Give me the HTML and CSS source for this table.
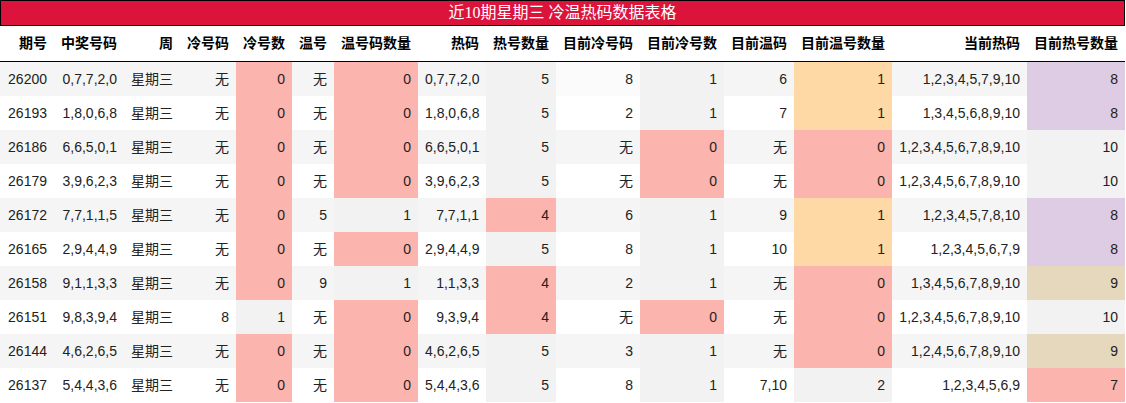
FILE: index.html
```html
<!DOCTYPE html>
<html lang="zh">
<head>
<meta charset="utf-8">
<title>近10期星期三 冷温热码数据表格</title>
<link rel="stylesheet" href="styles.css">
</head>
<body>
<table class="data">
  <caption class="title">近10期星期三 冷温热码数据表格</caption>
  <colgroup>
    <col class="w54"><col class="w70"><col class="w56"><col class="w56"><col class="w56">
    <col class="w42"><col class="w84"><col class="w68"><col class="w70"><col class="w84">
    <col class="w84"><col class="w70"><col class="w98"><col class="w135"><col class="w98">
  </colgroup>
  <thead>
    <tr>
      <th>期号</th><th>中奖号码</th><th>周</th><th>冷号码</th><th>冷号数</th><th>温号</th><th>温号码数量</th><th>热码</th><th>热号数量</th><th>目前冷号码</th><th>目前冷号数</th><th>目前温码</th><th>目前温号数量</th><th>当前热码</th><th>目前热号数量</th>
    </tr>
  </thead>
  <tbody>
    <tr class="odd">
      <td>26200</td><td>0,7,7,2,0</td><td>星期三</td><td>无</td><td class="pk">0</td><td>无</td><td class="pk">0</td><td>0,7,7,2,0</td><td class="gy">5</td><td class="hl">8</td><td class="gy">1</td><td>6</td><td class="or">1</td><td>1,2,3,4,5,7,9,10</td><td class="pu">8</td>
    </tr>
    <tr>
      <td>26193</td><td>1,8,0,6,8</td><td>星期三</td><td>无</td><td class="pk">0</td><td>无</td><td class="pk">0</td><td>1,8,0,6,8</td><td class="gy">5</td><td>2</td><td class="gy">1</td><td>7</td><td class="or">1</td><td>1,3,4,5,6,8,9,10</td><td class="pu">8</td>
    </tr>
    <tr class="odd">
      <td>26186</td><td>6,6,5,0,1</td><td>星期三</td><td>无</td><td class="pk">0</td><td>无</td><td class="pk">0</td><td>6,6,5,0,1</td><td class="gy">5</td><td>无</td><td class="pk">0</td><td>无</td><td class="pk">0</td><td>1,2,3,4,5,6,7,8,9,10</td><td class="gy">10</td>
    </tr>
    <tr>
      <td>26179</td><td>3,9,6,2,3</td><td>星期三</td><td>无</td><td class="pk">0</td><td>无</td><td class="pk">0</td><td>3,9,6,2,3</td><td class="gy">5</td><td>无</td><td class="pk">0</td><td>无</td><td class="pk">0</td><td>1,2,3,4,5,6,7,8,9,10</td><td class="gy">10</td>
    </tr>
    <tr class="odd">
      <td>26172</td><td>7,7,1,1,5</td><td>星期三</td><td>无</td><td class="pk">0</td><td>5</td><td class="gy">1</td><td>7,7,1,1</td><td class="pk">4</td><td>6</td><td class="gy">1</td><td>9</td><td class="or">1</td><td>1,2,3,4,5,7,8,10</td><td class="pu">8</td>
    </tr>
    <tr>
      <td>26165</td><td>2,9,4,4,9</td><td>星期三</td><td>无</td><td class="pk">0</td><td>无</td><td class="pk">0</td><td>2,9,4,4,9</td><td class="gy">5</td><td>8</td><td class="gy">1</td><td>10</td><td class="or">1</td><td>1,2,3,4,5,6,7,9</td><td class="pu">8</td>
    </tr>
    <tr class="odd">
      <td>26158</td><td>9,1,1,3,3</td><td>星期三</td><td>无</td><td class="pk">0</td><td>9</td><td class="gy">1</td><td>1,1,3,3</td><td class="pk">4</td><td>2</td><td class="gy">1</td><td>无</td><td class="pk">0</td><td>1,3,4,5,6,7,8,9,10</td><td class="tn">9</td>
    </tr>
    <tr>
      <td>26151</td><td>9,8,3,9,4</td><td>星期三</td><td>8</td><td class="gy">1</td><td>无</td><td class="pk">0</td><td>9,3,9,4</td><td class="pk">4</td><td>无</td><td class="pk">0</td><td>无</td><td class="pk">0</td><td>1,2,3,4,5,6,7,8,9,10</td><td class="gy">10</td>
    </tr>
    <tr class="odd">
      <td>26144</td><td>4,6,2,6,5</td><td>星期三</td><td>无</td><td class="pk">0</td><td>无</td><td class="pk">0</td><td>4,6,2,6,5</td><td class="gy">5</td><td>3</td><td class="gy">1</td><td>无</td><td class="pk">0</td><td>1,2,4,5,6,7,8,9,10</td><td class="tn">9</td>
    </tr>
    <tr>
      <td>26137</td><td>5,4,4,3,6</td><td>星期三</td><td>无</td><td class="pk">0</td><td>无</td><td class="pk">0</td><td>5,4,4,3,6</td><td class="gy">5</td><td>8</td><td class="gy">1</td><td>7,10</td><td class="gy">2</td><td>1,2,3,4,5,6,9</td><td class="pk">7</td>
    </tr>
  </tbody>
</table>
</body>
</html>
```

FILE: styles.css
```css
html, body {
  margin: 0;
  padding: 0;
  background: #ffffff;
}

.data {
  width: 1125px;
  table-layout: fixed;
  border-collapse: separate;
  border-spacing: 0;
  font-family: "Liberation Sans", "Noto Sans CJK SC", sans-serif;
  font-size: 14px;
  color: #222222;
}

.title {
  background: #dc143c;
  color: #ffffff;
  border: 1px solid #000000;
  height: 24px;
  line-height: 24px;
  font-family: "Liberation Serif", "Noto Sans CJK SC", serif;
  font-size: 16px;
  text-align: center;
}

.w42 { width: 42px; }
.w54 { width: 54px; }
.w56 { width: 56px; }
.w68 { width: 68px; }
.w70 { width: 70px; }
.w84 { width: 84px; }
.w98 { width: 98px; }
.w135 { width: 135px; }

.data th,
.data td {
  padding: 0 7px;
  text-align: right;
  white-space: nowrap;
  overflow: hidden;
}

.data th {
  height: 35px;
  line-height: 35px;
  font-weight: bold;
  color: #000000;
  border-bottom: 1px solid #000000;
}

.data td {
  height: 34px;
  line-height: 34px;
}

.data tr.odd td {
  background: #f5f5f5;
}

.data td.pk, .data tr.odd td.pk { background: #fbb4ae; }
.data td.or, .data tr.odd td.or { background: #fed9a6; }
.data td.pu, .data tr.odd td.pu { background: #decbe4; }
.data td.tn, .data tr.odd td.tn { background: #e5d8bd; }
.data td.gy, .data tr.odd td.gy { background: #f2f2f2; }
.data tr.odd td.hl { background: #fbfbfb; }
```
